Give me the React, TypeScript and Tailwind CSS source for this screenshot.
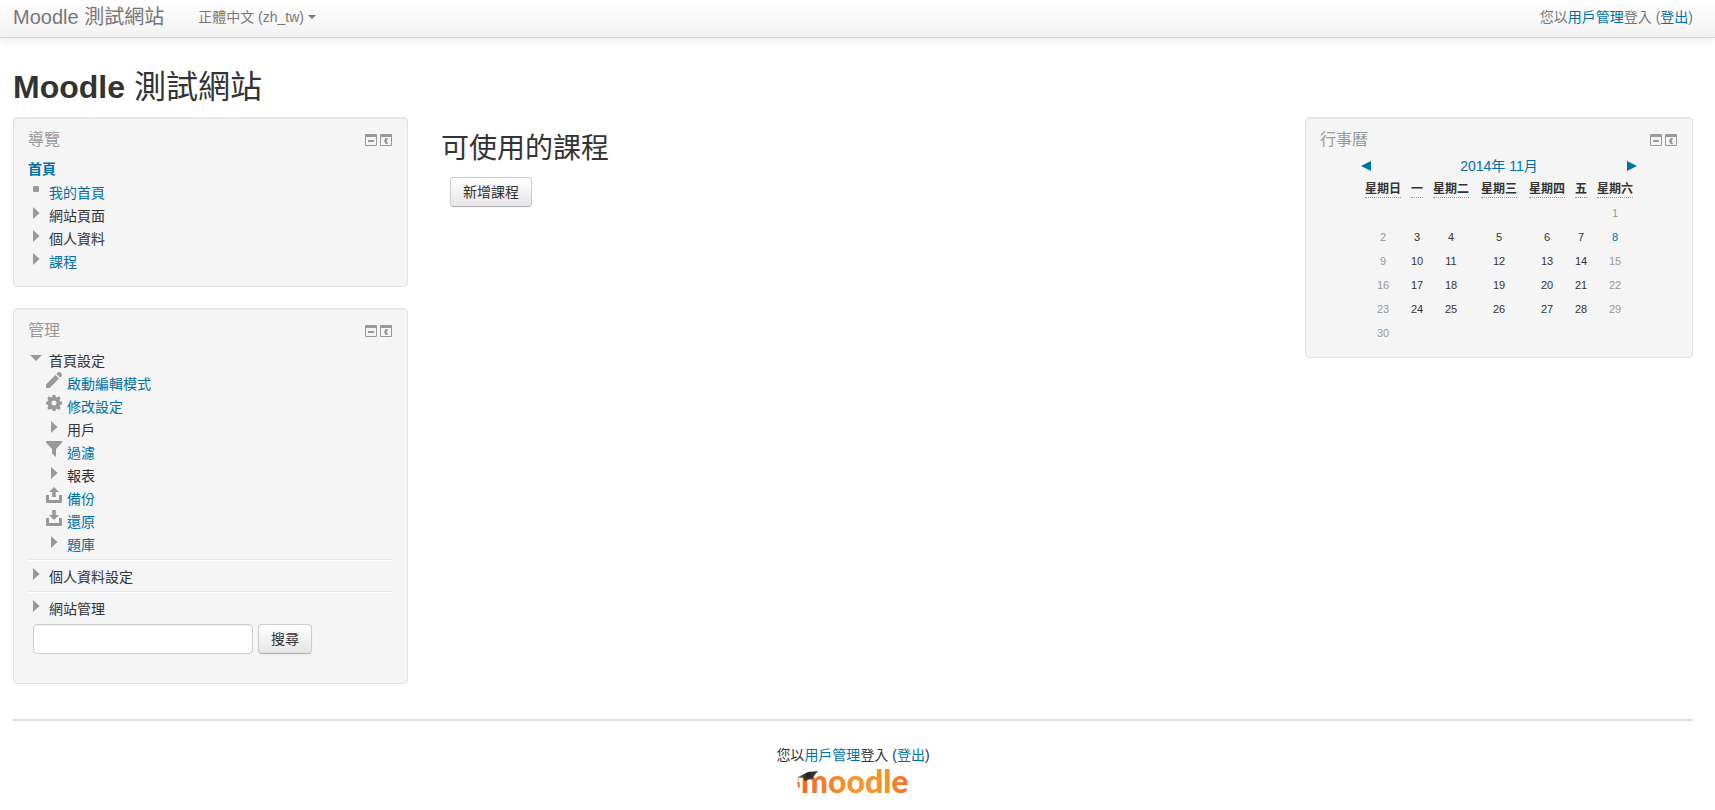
import React from 'react'

type IconName = 'leaf' | 'closed' | 'open' | 'pencil' | 'gear' | 'filter' | 'backup' | 'restore'

interface TreeItem {
  label: string
  icon: IconName
  link?: boolean
}

const NAV_ITEMS: TreeItem[] = [
  { label: '我的首頁', icon: 'leaf', link: true },
  { label: '網站頁面', icon: 'closed' },
  { label: '個人資料', icon: 'closed' },
  { label: '課程', icon: 'closed', link: true },
]

const FRONT_PAGE_ITEMS: TreeItem[] = [
  { label: '啟動編輯模式', icon: 'pencil', link: true },
  { label: '修改設定', icon: 'gear', link: true },
  { label: '用戶', icon: 'closed' },
  { label: '過濾', icon: 'filter', link: true },
  { label: '報表', icon: 'closed' },
  { label: '備份', icon: 'backup', link: true },
  { label: '還原', icon: 'restore', link: true },
  { label: '題庫', icon: 'closed', link: true },
]

const WEEKDAYS = ['星期日', '一', '星期二', '星期三', '星期四', '五', '星期六']

const TODAY = 8

// November 2014 starts on a Saturday
const WEEKS = Array.from({ length: 6 }, (_, w) =>
  Array.from({ length: 7 }, (_, d) => {
    const day = w * 7 + d - 5
    return day >= 1 && day <= 30 ? day : null
  })
)

const BUTTON =
  'h-[30px] rounded border border-[#ccc] border-b-[#b3b3b3] bg-linear-to-b from-white to-[#e6e6e6] px-3 text-sm leading-5 text-[#333] shadow-[inset_0_1px_0_rgba(255,255,255,0.2),0_1px_2px_rgba(0,0,0,0.05)]'

function TreeIcon({ name }: { name: IconName }) {
  return (
    <svg viewBox="0 0 16 16" className="mb-[7px] size-4 shrink-0 fill-[#999]" aria-hidden="true">
      {name === 'leaf' && <rect x="5" y="5" width="6" height="6" rx="1" />}
      {name === 'closed' && <path d="M5 3v12l6.500-6z" />}
      {name === 'open' && <path d="M2 6h12l-6 6z" />}
      {name === 'pencil' && (
        <path d="M0 16v-3.6L9.4 3l3.6 3.6L3.6 16zM10.4 2l1.4-1.4a2 2 0 0 1 2.8 0l.8.8a2 2 0 0 1 0 2.8L14 5.6z" />
      )}
      {name === 'gear' && (
        <path
          fillRule="evenodd"
          d="M6.6 0h2.8l.4 2 1.3.5L12.8 1.3l2 2-1.3 1.7.5 1.3 2 .4v2.7l-2 .4-.5 1.3 1.3 1.8-2 2-1.7-1.2-1.3.5-.4 2.1H6.6l-.4-2.1-1.3-.5-1.7 1.2-2-2 1.2-1.8-.5-1.3-1.9-.4V6.700l1.9-.4.5-1.3-1.2-1.7 2-2L4.9 2.5 6.2 2zM8 5.5a2.5 2.5 0 1 0 0 5 2.5 2.5 0 0 0 0-5z"
        />
      )}
      {name === 'filter' && <path d="M0 0h16v1.5L10 8v8l-4-3.5V8L0 1.5z" />}
      {name === 'backup' && (
        <path d="M8 0l5 5H9.8v5H6.2V5H3zM0 8h3v5h10V8h3v7a1 1 0 0 1-1 1H1a1 1 0 0 1-1-1z" />
      )}
      {name === 'restore' && (
        <path d="M6.2 0h3.6v5H13l-5 5-5-5h3.2zM0 8h3v5h10V8h3v7a1 1 0 0 1-1 1H1a1 1 0 0 1-1-1z" />
      )}
    </svg>
  )
}

function TreeRow({ item, children }: { item: TreeItem; children?: React.ReactNode }) {
  return (
    <li>
      <div className="flex h-[23px] items-center gap-[5px]">
        <TreeIcon name={item.icon} />
        {item.link ? (
          <a href="#" className="text-[#0070a8]">{item.label}</a>
        ) : (
          <span>{item.label}</span>
        )}
      </div>
      {children}
    </li>
  )
}

function Block({ title, className = '', children }: { title: string; className?: string; children: React.ReactNode }) {
  return (
    <section
      className={`rounded border border-[#e3e3e3] bg-[#f5f5f5] px-3.5 pt-2.5 shadow-[inset_0_1px_1px_rgba(0,0,0,0.05)] ${className}`}
    >
      <div className="flex h-[22px] items-center justify-between pt-0.5">
        <h2 className="text-base leading-5 text-[#999] [text-shadow:0_1px_0_rgba(255,255,255,0.5)]">{title}</h2>
        <div className="flex gap-[3px] pr-px">
          <button type="button" aria-label="−">
            <svg viewBox="0 0 12 12" className="size-3 fill-[#999]">
              <path fillRule="evenodd" d="M1 0h10a1 1 0 0 1 1 1v10a1 1 0 0 1-1 1H1a1 1 0 0 1-1-1V1a1 1 0 0 1 1-1zM1 3v8h10V3z" />
              <path d="M3 6h6v2H3z" />
            </svg>
          </button>
          <button type="button" aria-label="‹">
            <svg viewBox="0 0 12 12" className="size-3 fill-[#999]">
              <path fillRule="evenodd" d="M1 0h10a1 1 0 0 1 1 1v10a1 1 0 0 1-1 1H1a1 1 0 0 1-1-1V1a1 1 0 0 1 1-1zM1 3v8h10V3z" />
              <path d="M5.5 4H8L6.8 7 8 10H5.5L4 7z" />
            </svg>
          </button>
        </div>
      </div>
      {children}
    </section>
  )
}

function Divider() {
  return <hr className="mb-1 mt-[3px] h-0.5 border-b border-t border-b-white border-t-[#e8e8e8]" />
}

function Calendar() {
  return (
    <div className="mx-auto mt-1.5 w-[280px]">
      <div className="flex h-5 items-center justify-between px-0.5 text-[#0070a8]">
        <a href="#" aria-label="◄">
          <svg viewBox="0 0 10 10" className="size-2.5 fill-current"><path d="M10 0v10L0 5z" /></svg>
        </a>
        <a href="#">2014年 11月</a>
        <a href="#" aria-label="►">
          <svg viewBox="0 0 10 10" className="size-2.5 fill-current"><path d="M0 0v10l10-5z" /></svg>
        </a>
      </div>
      <table className="mt-px w-full table-fixed text-center text-[11px]">
        <thead>
          <tr className="h-6">
            {WEEKDAYS.map((day) => (
              <th key={day} className={day.length === 1 ? 'w-5 p-0' : 'w-12 p-0'}>
                <abbr className="inline-block h-[17px] whitespace-nowrap border-b border-dotted border-[#999] text-xs leading-4 no-underline">
                  {day}
                </abbr>
              </th>
            ))}
          </tr>
        </thead>
        <tbody>
          {WEEKS.map((week, w) => (
            <tr key={w} className="h-6">
              {week.map((day, d) => (
                <td key={d} className={d === 0 || d === 6 ? 'p-0 text-[#999]' : 'p-0'}>
                  {day === TODAY ? <a href="#" className="text-[#0070a8]">{day}</a> : day}
                </td>
              ))}
            </tr>
          ))}
        </tbody>
      </table>
    </div>
  )
}

function LoginInfo() {
  return (
    <>
      您以<a href="#" className="text-[#0070a8]">用戶管理</a>登入 (<a href="#" className="text-[#0070a8]">登出</a>)
    </>
  )
}

function MoodleLogo() {
  return (
    <a href="#" className="block">
      <svg viewBox="0 0 112 30" className="h-[30px] w-28 overflow-visible" role="img">
        <defs>
          <linearGradient id="orange" x1="0" x2="1">
            <stop offset="0" stopColor="#ef6a24" />
            <stop offset="0.5" stopColor="#f9982e" />
            <stop offset="0.8" stopColor="#f68e2c" />
            <stop offset="1" stopColor="#ee6f27" />
          </linearGradient>
          <linearGradient id="cap" x1="0" x2="1">
            <stop offset="0" stopColor="#777" />
            <stop offset="0.5" stopColor="#222" />
            <stop offset="1" stopColor="#444" />
          </linearGradient>
        </defs>
        <text x="4" y="28" fill="url(#orange)" className="font-['Lato',sans-serif] text-[32px] font-black">moodle</text>
        {/* Mortarboard sitting on the m */}
        <path d="M6 12l2 4.5c2-2 5-3 8-2.5l1-4z" fill="#333" />
        <path d="M0 12.5L11 7l10-1-5 6-8 1z" fill="url(#cap)" />
        <path d="M2 12.5c-1 3-1.5 5-.7 8" fill="none" stroke="#c9a58d" strokeWidth="1" />
        <path d="M.5 17l2 0 .3 6-1.8-1z" fill="#ef6a24" />
      </svg>
    </a>
  )
}

export default function App() {
  return (
    <div className="bg-white font-['Liberation_Sans','Noto_Sans_CJK_TC',sans-serif] text-sm leading-5 text-[#333]">
      <header className="flex h-[38px] items-center border-b border-[#d4d4d4] bg-linear-to-b from-white to-[#f2f2f2] pb-1 pl-[13px] pr-[22px] text-[#777] shadow-[0_1px_10px_rgba(0,0,0,0.1)]">
        <a href="#" className="text-xl leading-5">Moodle 測試網站</a>
        <button type="button" className="ml-[34px] flex items-center gap-1">
          正體中文 (zh_tw)
          <svg viewBox="0 0 8 4" className="h-1 w-2 fill-[#777]"><path d="M0 0h8L4 4z" /></svg>
        </button>
        <p className="ml-auto"><LoginInfo /></p>
      </header>

      <div className="pl-[13px] pr-[22px]">
        <h1 className="mb-2.5 mt-[29px] text-[32px] font-bold leading-10">
          Moodle <span className="font-normal">測試網站</span>
        </h1>

        <div className="grid grid-cols-[395fr_897fr_388fr] items-start">
          <aside className="flex flex-col gap-[21px]">
            <Block title="導覽" className="pb-[13px]">
              <nav className="mt-2">
                <a href="#" className="block h-[23px] font-bold leading-[23px] text-[#0070a8]">首頁</a>
                <ul>
                  {NAV_ITEMS.map((item) => <TreeRow key={item.label} item={item} />)}
                </ul>
              </nav>
            </Block>

            <Block title="管理" className="pb-[29px]">
              <ul className="mt-2">
                <TreeRow item={{ label: '首頁設定', icon: 'open' }}>
                  <ul className="pl-[18px]">
                    {FRONT_PAGE_ITEMS.map((item) => <TreeRow key={item.label} item={item} />)}
                  </ul>
                </TreeRow>
              </ul>
              <Divider />
              <ul><TreeRow item={{ label: '個人資料設定', icon: 'closed' }} /></ul>
              <Divider />
              <ul><TreeRow item={{ label: '網站管理', icon: 'closed' }} /></ul>
              <form className="mt-1 flex gap-[5px] pl-[5px]" onSubmit={(e) => e.preventDefault()}>
                <input
                  type="text"
                  aria-label="搜尋"
                  className="h-[30px] w-[220px] rounded border border-[#ccc] bg-white px-1.5 shadow-[inset_0_1px_1px_rgba(0,0,0,0.075)]"
                />
                <button type="submit" className={BUTTON}>搜尋</button>
              </form>
            </Block>
          </aside>

          <main className="pl-[33px] pt-3">
            <h2 className="mb-2 text-[28px] leading-10">可使用的課程</h2>
            <button type="button" className={`ml-[9px] ${BUTTON}`}>新增課程</button>
          </main>

          <aside>
            <Block title="行事曆" className="pb-3">
              <Calendar />
            </Block>
          </aside>
        </div>

        <footer className="mt-[35px] flex flex-col items-center border-t-2 border-[#ddd] pb-4 pt-6">
          <p><LoginInfo /></p>
          <MoodleLogo />
        </footer>
      </div>
    </div>
  )
}
